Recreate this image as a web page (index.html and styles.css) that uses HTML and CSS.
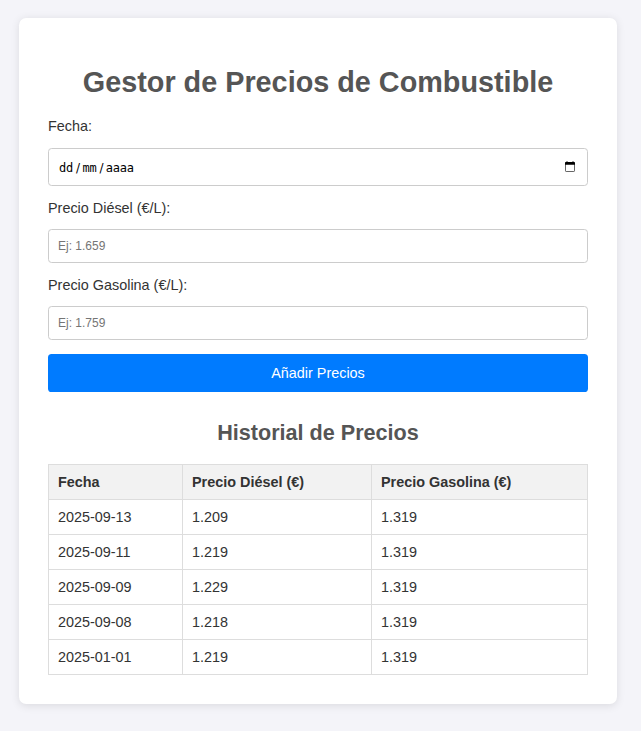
FILE: index.html
```html
<!DOCTYPE html>
<html lang="es">
<head>
<meta charset="utf-8">
<title>Gestor de Precios de Combustible</title>
<link rel="stylesheet" href="styles.css">
</head>
<body>
<main class="container">
<h1>Gestor de Precios de Combustible</h1>
<form class="form">
<label class="date-label">Fecha:</label>
<div class="date-field"><span class="date-text"><span>dd</span><span class="sep">/</span><span>mm</span><span class="sep">/</span><span>aaaa</span></span>
<svg class="calendar" viewBox="0 0 12 12" aria-hidden="true"><rect class="calendar-page" x="1.5" y="2.5" width="9" height="8" rx=".6"/><path d="M1 3.8V1.7Q1 1 1.8 1H2.5V.3H3.5V1H8.5V.3H9.5V1H10.2Q11 1 11 1.7V3.8Z"/></svg></div>
<label for="diesel">Precio Diésel (€/L):</label>
<input id="diesel" type="text" placeholder="Ej: 1.659">
<label for="gasolina">Precio Gasolina (€/L):</label>
<input id="gasolina" type="text" placeholder="Ej: 1.759">
<button type="button">Añadir Precios</button>
</form>
<h2>Historial de Precios</h2>
<table>
<colgroup><col class="col-date"><col class="col-diesel"><col></colgroup>
<thead><tr><th>Fecha</th><th>Precio Diésel (€)</th><th>Precio Gasolina (€)</th></tr></thead>
<tbody>
<tr><td>2025-09-13</td><td>1.209</td><td>1.319</td></tr>
<tr><td>2025-09-11</td><td>1.219</td><td>1.319</td></tr>
<tr><td>2025-09-09</td><td>1.229</td><td>1.319</td></tr>
<tr><td>2025-09-08</td><td>1.218</td><td>1.319</td></tr>
<tr><td>2025-01-01</td><td>1.219</td><td>1.319</td></tr>
</tbody>
</table>
</main>
</body>
</html>
```
FILE: styles.css
```css
* { box-sizing: border-box; }
body {
  margin: 0;
  padding: 18px 24px 27px 19px;
  background: #f4f4f9;
  color: #333;
  font: 14.4px/17px "Liberation Sans", Arial, sans-serif;
}
.container {
  height: 686px;
  padding: 47px 29px 29px;
  background: #fff;
  border-radius: 7.2px;
  box-shadow: 0 1.8px 9px rgba(0, 0, 0, 0.1);
}
h1, h2 { margin: 0; color: #555; text-align: center; }
h1 { font-size: 28.8px; line-height: 34px; margin-bottom: 19px; }
h2 { font-size: 21.6px; line-height: 25px; margin: 28px 0 19px; }
.form { display: flex; flex-direction: column; }
label { margin-bottom: 12px; }
.date-label { margin-bottom: 13px; }
input, .date-field {
  width: 100%;
  border: 1px solid #ccc;
  border-radius: 3.6px;
  background: #fff;
  margin: 0 0 14px;
}
input { height: 34px; padding: 0 9px; font: 12px "Liberation Sans", Arial, sans-serif; }
input::placeholder { color: #757575; }
.date-field {
  height: 38px;
  padding: 0 11px 0 10px;
  display: flex;
  align-items: center;
  justify-content: space-between;
  color: #000;
  font: 12px "DejaVu Sans Mono", monospace;
}
.date-text { display: flex; align-items: baseline; padding-top: 2px; letter-spacing: -0.22px; }
.sep { width: 4px; margin: 0 2.4px 0 3px; font-family: "DejaVu Sans", sans-serif; letter-spacing: 0; }
.calendar { width: 12px; height: 12px; fill: #000; }
.calendar-page { fill: none; stroke: #666; }
button {
  height: 38px;
  border: 0;
  border-radius: 3.6px;
  background: #007bff;
  color: #fff;
  font: 14.4px "Liberation Sans", Arial, sans-serif;
}
table { width: 540px; border-collapse: collapse; table-layout: fixed; }
.col-date { width: 134px; }
.col-diesel { width: 189px; }
th, td { height: 35px; padding: 0 9px; border: 1px solid #ddd; text-align: left; }
th { background: #f2f2f2; }
```
